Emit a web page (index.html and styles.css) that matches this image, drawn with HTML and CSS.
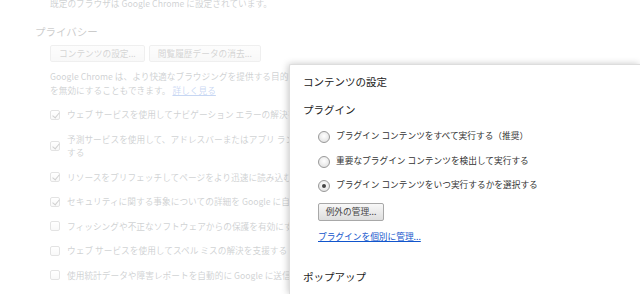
FILE: index.html
```html
<!DOCTYPE html>
<html lang="ja">
<head>
<meta charset="utf-8">
<title>コンテンツの設定</title>
<link rel="stylesheet" href="styles.css">
</head>
<body>
<div class="page">
  <p class="note">既定のブラウザは Google Chrome に設定されています。</p>
  <section class="privacy">
    <h2 class="sec-title">プライバシー</h2>
    <div class="btn-row">
      <button class="btn">コンテンツの設定...</button>
      <button class="btn">閲覧履歴データの消去...</button>
    </div>
    <p class="desc">Google Chrome は、より快適なブラウジングを提供する目的でウェブ サービスを使用することがあります。<br>を無効にすることもできます。 <a class="link" href="#">詳しく見る</a></p>
    <ul class="checks">
      <li class="check"><span class="cb on"></span><span class="lbl">ウェブ サービスを使用してナビゲーション エラーの解決を支援する</span></li>
      <li class="check"><span class="cb on"></span><span class="lbl">予測サービスを使用して、アドレスバーまたはアプリ ランチャーの検索ボックスに入力された<br>する</span></li>
      <li class="check"><span class="cb on"></span><span class="lbl">リソースをプリフェッチしてページをより迅速に読み込む</span></li>
      <li class="check"><span class="cb on"></span><span class="lbl">セキュリティに関する事象についての詳細を Google に自動送信する</span></li>
      <li class="check"><span class="cb"></span><span class="lbl">フィッシングや不正なソフトウェアからの保護を有効にする</span></li>
      <li class="check"><span class="cb"></span><span class="lbl">ウェブ サービスを使用してスペル ミスの解決を支援する</span></li>
      <li class="check"><span class="cb"></span><span class="lbl">使用統計データや障害レポートを自動的に Google に送信する</span></li>
    </ul>
  </section>
</div>
<div class="overlay"></div>
<div class="dialog">
  <h1 class="dlg-title">コンテンツの設定</h1>
  <h2 class="dlg-head">プラグイン</h2>
  <div class="radios">
    <label class="radio-row"><span class="radio"></span><span>プラグイン コンテンツをすべて実行する（推奨）</span></label>
    <label class="radio-row"><span class="radio"></span><span>重要なプラグイン コンテンツを検出して実行する</span></label>
    <label class="radio-row"><span class="radio sel"></span><span>プラグイン コンテンツをいつ実行するかを選択する</span></label>
  </div>
  <div class="dlg-actions">
    <button class="dlg-btn">例外の管理...</button>
    <a class="dlg-link" href="#">プラグインを個別に管理...</a>
  </div>
  <h2 class="dlg-head popup">ポップアップ</h2>
</div>
</body>
</html>
```

FILE: styles.css
```css
* { box-sizing: border-box; }
html, body { margin: 0; padding: 0; }
body {
  width: 640px;
  height: 294px;
  overflow: hidden;
  position: relative;
  background: #fff;
  font-family: "Noto Sans CJK JP", "Open Sans", sans-serif;
  color: #303942;
  font-size: 8.7px;
}
.page {
  padding-left: 35px;
  height: 294px;
  overflow: hidden;
}
.note {
  margin: -3px 0 0 15px;
  line-height: 14px;
  white-space: nowrap;
}
.sec-title {
  margin: 13px 0 0;
  font-size: 10.5px;
  font-weight: normal;
  line-height: 16px;
  color: #222;
}
.privacy > *:not(.sec-title) { margin-left: 15px; }
.btn-row {
  display: flex;
  gap: 4px;
  margin-top: 5px;
}
.btn {
  height: 17px;
  padding: 0 8px;
  font: inherit;
  line-height: 15px;
  color: #444;
  border: 1px solid #bbb;
  border-radius: 2px;
  background: linear-gradient(#f4f4f4, #e2e2e2);
}
.desc {
  margin-top: 8px;
  margin-bottom: 0;
  line-height: 14px;
  white-space: nowrap;
}
.link { color: #15c; }
.checks {
  list-style: none;
  padding: 0;
  margin-top: 10px;
  display: flex;
  flex-direction: column;
  gap: 11px;
}
.check {
  display: flex;
  align-items: center;
  gap: 7px;
  line-height: 13.5px;
  white-space: nowrap;
}
.cb {
  width: 10px;
  height: 10px;
  flex: none;
  border: 1px solid #888;
  border-radius: 2px;
  background: linear-gradient(#fff, #e4e4e4);
  position: relative;
}
.cb.on::after {
  content: "";
  position: absolute;
  left: 2.5px;
  top: 0px;
  width: 3px;
  height: 6px;
  border-right: 1.5px solid #333;
  border-bottom: 1.5px solid #333;
  transform: rotate(40deg);
}
.overlay {
  position: absolute;
  inset: 0;
  background: rgba(255, 255, 255, 0.77);
}
.dialog {
  position: absolute;
  left: 289px;
  top: 64px;
  right: 0;
  bottom: 0;
  background: #fff;
  box-shadow: -1px 0 7px rgba(0, 0, 0, 0.22);
  border-left: 1px solid #ddd;
  border-top: 1px solid #ddd;
  border-radius: 2px 0 0 0;
  padding: 9px 0 0 13px;
  color: #333;
  overflow: hidden;
}
.dlg-title {
  margin: 0;
  font-size: 10.5px;
  font-weight: normal;
  line-height: 16px;
  color: #222;
}
.dlg-head {
  margin: 12px 0 0;
  font-size: 10.5px;
  font-weight: normal;
  line-height: 16px;
  color: #222;
}
.radios {
  margin: 11px 0 0 15px;
  display: flex;
  flex-direction: column;
  gap: 10.5px;
}
.radio-row {
  display: flex;
  align-items: center;
  gap: 6px;
  line-height: 14px;
}
.radio {
  width: 12px;
  height: 12px;
  flex: none;
  border-radius: 50%;
  border: 1px solid #999;
  background: radial-gradient(circle at 50% 40%, #fff, #dcdcdc);
  position: relative;
  top: 1px;
}
.radio.sel::after {
  content: "";
  position: absolute;
  left: 3px;
  top: 3px;
  width: 4px;
  height: 4px;
  border-radius: 50%;
  background: #444;
}
.dlg-actions {
  margin: 11px 0 0 15px;
  display: flex;
  flex-direction: column;
  align-items: flex-start;
  gap: 9px;
}
.dlg-btn {
  height: 18px;
  width: 66px;
  padding: 0;
  font: inherit;
  line-height: 16px;
  color: #444;
  border: 1px solid #a8a8a8;
  border-radius: 2px;
  background: linear-gradient(#f8f8f8, #dedede);
}
.dlg-link {
  color: #15c;
  line-height: 14px;
  text-decoration: underline;
}
.popup { margin-top: 25px; }
```
